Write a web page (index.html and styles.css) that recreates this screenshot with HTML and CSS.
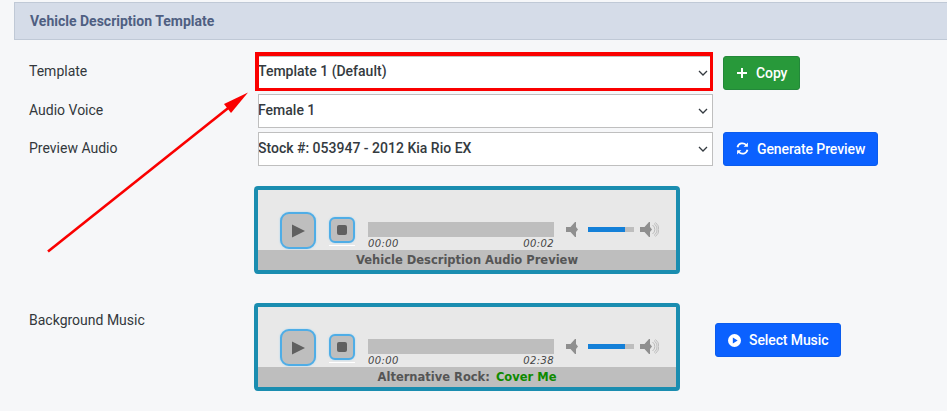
FILE: index.html
```html
<!DOCTYPE html>
<html lang="en">
<head>
<meta charset="utf-8">
<title>Vehicle Description Template</title>
<link rel="stylesheet" href="styles.css">
</head>
<body>
<section class="panel">
  <h2 class="panel-title">Vehicle Description Template</h2>
  <div class="form">
    <div class="row row-top">
      <label class="label">Template</label>
      <div class="select-wrap">
        <select class="select"><option>Template 1 (Default)</option></select>
        <svg class="chevron" viewBox="0 0 10 6"><path d="M1 1l4 4 4-4" fill="none" stroke="#343a40" stroke-width="1.300"/></svg>
      </div>
      <button class="btn btn-green">
        <svg class="btn-icon" viewBox="0 0 12 12"><path d="M6 1v10M1 6h10" stroke="#fff" stroke-width="2" fill="none"/></svg>Copy
      </button>
    </div>
    <div class="row">
      <label class="label">Audio Voice</label>
      <div class="select-wrap">
        <select class="select"><option>Female 1</option></select>
        <svg class="chevron" viewBox="0 0 10 6"><path d="M1 1l4 4 4-4" fill="none" stroke="#343a40" stroke-width="1.300"/></svg>
      </div>
    </div>
    <div class="row">
      <label class="label">Preview Audio</label>
      <div class="select-wrap">
        <select class="select"><option>Stock #: 053947 - 2012 Kia Rio EX</option></select>
        <svg class="chevron" viewBox="0 0 10 6"><path d="M1 1l4 4 4-4" fill="none" stroke="#343a40" stroke-width="1.300"/></svg>
      </div>
      <button class="btn btn-blue">
        <svg class="btn-icon sync" viewBox="0 0 14 14"><path d="M1.600 5.600A5.500 5.500 0 0 1 11 3.200M12.400 8.400A5.500 5.500 0 0 1 3 10.800" fill="none" stroke="#fff" stroke-width="1.900"/><path d="M12.800 .6v4.600H8.200zM1.200 13.400V8.800h4.600z" fill="#fff"/></svg>Generate Preview
      </button>
    </div>

    <div class="row player-row first">
      <div class="label"></div>
      <div class="player">
        <div class="controls">
          <div class="ctl ctl-play"><svg viewBox="0 0 14 14"><path d="M0 0l14 7-14 7z" fill="#606060"/></svg></div>
          <div class="ctl ctl-stop"><span class="stop-square"></span></div>
          <div class="track">
            <div class="bar"></div>
            <div class="times"><span>00:00</span><span>00:02</span></div>
          </div>
          <svg class="vol-low" viewBox="0 0 12 15"><path d="M0 5h4.500L9 0h1v5l2 2.500-2 2.500v5H9L4.500 10H0z" fill="#8f8f8f"/></svg>
          <div class="vol-bar"><div class="vol-fill"></div></div>
          <svg class="vol-high" viewBox="0 0 19 15"><path d="M0 5h4.500L9 0h1v5l2 2.500-2 2.500v5H9L4.500 10H0z" fill="#8f8f8f"/><path d="M12.500 3a5.500 5.500 0 0 1 0 9M14 1.500a7.500 7.500 0 0 1 0 12M15.500 .5a9 9 0 0 1 0 14" fill="none" stroke="#b5b5b5" stroke-width=".9"/></svg>
        </div>
        <div class="caption">Vehicle Description Audio Preview</div>
      </div>
    </div>

    <div class="row player-row second">
      <label class="label label-music">Background Music</label>
      <div class="player">
        <div class="controls">
          <div class="ctl ctl-play"><svg viewBox="0 0 14 14"><path d="M0 0l14 7-14 7z" fill="#606060"/></svg></div>
          <div class="ctl ctl-stop"><span class="stop-square"></span></div>
          <div class="track">
            <div class="bar"></div>
            <div class="times"><span>00:00</span><span>02:38</span></div>
          </div>
          <svg class="vol-low" viewBox="0 0 12 15"><path d="M0 5h4.500L9 0h1v5l2 2.500-2 2.500v5H9L4.500 10H0z" fill="#8f8f8f"/></svg>
          <div class="vol-bar"><div class="vol-fill"></div></div>
          <svg class="vol-high" viewBox="0 0 19 15"><path d="M0 5h4.500L9 0h1v5l2 2.500-2 2.500v5H9L4.500 10H0z" fill="#8f8f8f"/><path d="M12.500 3a5.500 5.500 0 0 1 0 9M14 1.500a7.500 7.500 0 0 1 0 12M15.500 .5a9 9 0 0 1 0 14" fill="none" stroke="#b5b5b5" stroke-width=".9"/></svg>
        </div>
        <div class="caption">Alternative Rock: <span class="song">Cover Me</span></div>
      </div>
      <button class="btn btn-blue btn-music">
        <svg class="btn-icon play-circle" viewBox="0 0 14 14"><path fill-rule="evenodd" d="M7 0a7 7 0 1 1 0 14A7 7 0 0 1 7 0zM5.200 3.800v6.400L10.400 7z" fill="#fff"/></svg>Select Music
      </button>
    </div>
  </div>
</section>

<div class="callout"></div>
<svg class="arrow" viewBox="0 0 947 411"><path d="M48 251.500L232 105" stroke="#fa0000" stroke-width="2.600" fill="none"/><path d="M248 92.500L224 104l7 9z" fill="#fa0000"/></svg>
</body>
</html>
```

FILE: styles.css
```css
* { box-sizing: border-box; }

html, body { height: 100%; }

body {
  margin: 0;
  background: #f6f7f9;
  font-family: Roboto, "Liberation Sans", sans-serif;
  font-size: 14px;
  color: #2f3338;
  overflow: hidden;
  position: relative;
}

.panel { padding: 2px 0 0 14px; }

.panel-title {
  margin: 0;
  height: 38px;
  padding: 0 0 0 15px;
  display: flex;
  align-items: center;
  background: #d5dce8;
  border: 1px solid #c0c9d6;
  border-right: 0;
  color: #4f5f82;
  font-size: 14px;
  font-weight: 700;
}

.form { padding: 16px 0 0 15px; }

.row {
  display: flex;
  align-items: center;
  height: 34px;
  margin-bottom: 4px;
}

.label {
  width: 229px;
  flex: none;
  padding-bottom: 2px;
  font-size: 14px;
  color: #33373c;
}

.row-top .label { padding-bottom: 4px; }

.select-wrap { position: relative; width: 455px; height: 34px; flex: none; }

.select {
  appearance: none;
  -webkit-appearance: none;
  width: 100%;
  height: 100%;
  margin: 0;
  padding: 0 0 2px;
  text-indent: -1px;
  background: #fff;
  border: 1px solid #bfbfbf;
  border-radius: 0;
  font-family: Roboto, "Liberation Sans", sans-serif;
  font-size: 14px;
  font-weight: 500;
  color: #343a40;
}

.row-top .select { padding-bottom: 4px; }

.chevron {
  position: absolute;
  right: 5px;
  top: 14px;
  width: 10px;
  height: 6px;
}

.btn {
  display: inline-flex;
  align-items: center;
  height: 34px;
  margin-left: 10px;
  padding: 0 12px 1px;
  border-radius: 3px;
  font-family: Roboto, "Liberation Sans", sans-serif;
  font-size: 14px;
  font-weight: 500;
  letter-spacing: -.1px;
  color: #fff;
  white-space: nowrap;
}

.btn-green { background: #28993a; border: 1px solid #23883a; }
.btn-blue { background: #0b61ff; border: 1px solid #0b5ced; }

.btn-icon { width: 12px; height: 12px; margin-right: 8px; flex: none; }
.sync { width: 13px; height: 13px; margin-right: 8px; }
.play-circle { width: 13px; height: 13px; margin-right: 8px; }

.player-row { height: 88px; align-items: flex-start; }
.player-row.first { margin: 20px 0 29px; }

.label-music { padding: 9px 0 0; }

.player {
  width: 426px;
  height: 88px;
  margin-left: -4px;
  flex: none;
  display: flex;
  flex-direction: column;
  background: #e8e8e8;
  border: 4px solid #1a8db0;
  border-radius: 4px;
}

.controls {
  height: 60px;
  flex: none;
  display: flex;
  align-items: flex-start;
  padding: 22px 0 0 22px;
}

.ctl {
  display: flex;
  align-items: center;
  justify-content: center;
  flex: none;
  background: #bebebe;
  border: 2px solid #4fade6;
  box-shadow: 0 0 2px #9fd3f2;
}

.ctl-play { width: 36px; height: 37px; border-radius: 9px; }
.ctl-play svg { width: 13px; height: 14px; }

.ctl-stop {
  width: 26px;
  height: 26px;
  margin: 5px 0 0 13px;
  border-radius: 6px;
  position: relative;
}

.ctl-stop::after {
  content: "";
  position: absolute;
  left: -2px;
  right: -2px;
  bottom: -5px;
  height: 1px;
  background: #fff;
}

.stop-square { width: 10px; height: 10px; background: #606060; border-radius: 2px; }

.track { width: 186px; margin: 10px 0 0 13px; flex: none; }
.bar { height: 15px; background: #bebebe; }

.times {
  display: flex;
  justify-content: space-between;
  font-family: "DejaVu Sans", sans-serif;
  font-size: 10px;
  font-style: italic;
  line-height: 11px;
  letter-spacing: .4px;
  color: #444;
  margin-top: 1px;
}

.vol-low { width: 12px; height: 15px; margin: 10px 0 0 12px; flex: none; }

.vol-bar {
  width: 46px;
  height: 5px;
  margin: 15px 0 0 10px;
  background: #bebebe;
  flex: none;
}

.vol-fill { width: 37px; height: 100%; background: #1480d8; }

.vol-high { width: 19px; height: 15px; margin: 10px 0 0 6px; flex: none; }

.caption {
  height: 20px;
  flex: none;
  background: #bebebe;
  text-align: center;
  font-family: "DejaVu Sans", sans-serif;
  font-size: 11.500px;
  font-weight: 700;
  line-height: 21px;
  color: #555;
}

.song { color: #0f8a00; margin-left: 2px; }

.btn-music { margin: 20px 0 0 35px; padding-bottom: 0; }

.callout {
  position: absolute;
  left: 255px;
  top: 52px;
  width: 458px;
  height: 39px;
  border: 3px solid #fa0000;
  border-top-width: 4px;
  border-left-width: 4px;
}

.arrow {
  position: absolute;
  left: 0;
  top: 0;
  width: 947px;
  height: 411px;
  pointer-events: none;
}
```
